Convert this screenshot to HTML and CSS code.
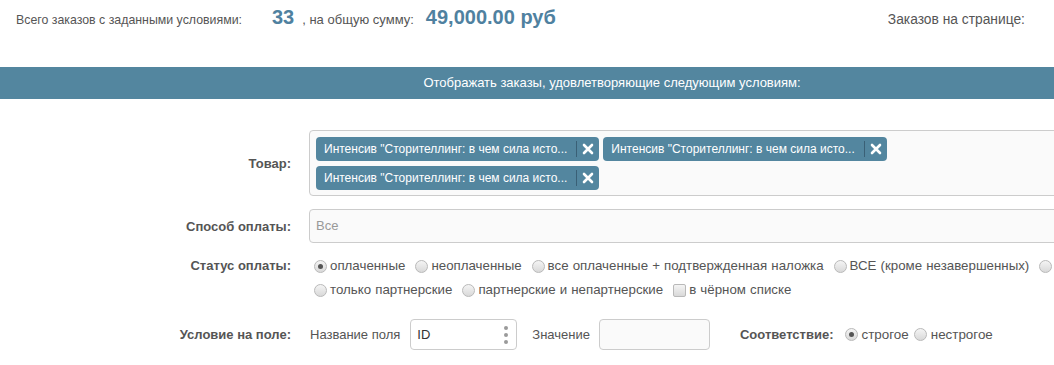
FILE: index.html
```html
<!DOCTYPE html>
<html lang="ru">
<head>
<meta charset="utf-8">
<title>Заказы</title>
<link rel="stylesheet" href="styles.css">
</head>
<body>
<div class="page">
  <div class="summary">
    <span class="summary-text summary-lead">Всего заказов с заданными условиями:</span>
    <span class="summary-num num-count">33</span>
    <span class="summary-text">, на общую сумму:</span>
    <span class="summary-num num-sum">49,000.00 руб</span>
    <span class="summary-text per-page">Заказов на странице:</span>
  </div>

  <div class="bar">Отображать заказы, удовлетворяющие следующим условиям:</div>

  <div class="form">
    <div class="row row-goods">
      <div class="row-label">Товар:</div>
      <div class="tags-box">
        <div class="tags-list">
          <span class="tag"><span class="tag-text">Интенсив "Сторителлинг: в чем сила исто...</span><span class="tag-remove"><svg viewBox="0 0 12 12" width="12" height="12"><path d="M2 2 L10 10 M10 2 L2 10" stroke="#fff" stroke-width="2.6" stroke-linecap="round"/></svg></span></span>
          <span class="tag"><span class="tag-text">Интенсив "Сторителлинг: в чем сила исто...</span><span class="tag-remove"><svg viewBox="0 0 12 12" width="12" height="12"><path d="M2 2 L10 10 M10 2 L2 10" stroke="#fff" stroke-width="2.6" stroke-linecap="round"/></svg></span></span>
          <span class="tag"><span class="tag-text">Интенсив "Сторителлинг: в чем сила исто...</span><span class="tag-remove"><svg viewBox="0 0 12 12" width="12" height="12"><path d="M2 2 L10 10 M10 2 L2 10" stroke="#fff" stroke-width="2.6" stroke-linecap="round"/></svg></span></span>
        </div>
      </div>
    </div>

    <div class="row row-pay">
      <div class="row-label">Способ оплаты:</div>
      <div class="text-input placeholder">Все</div>
    </div>

    <div class="row row-status">
      <div class="row-label">Статус оплаты:</div>
      <div class="options">
        <span class="option"><span class="radio checked"></span>оплаченные</span>
        <span class="option"><span class="radio"></span>неоплаченные</span>
        <span class="option"><span class="radio"></span>все оплаченные + подтвержденная наложка</span>
        <span class="option"><span class="radio"></span>ВСЕ (кроме незавершенных)</span>
        <span class="option option-accent"><span class="radio"></span>предзаказы</span>
        <span class="option"><span class="radio"></span>только партнерские</span>
        <span class="option"><span class="radio"></span>партнерские и непартнерские</span>
        <span class="option"><span class="checkbox"></span>в чёрном списке</span>
      </div>
    </div>

    <div class="row row-field">
      <div class="row-label">Условие на поле:</div>
      <div class="field-controls">
        <span class="field-caption">Название поля</span>
        <span class="select-box">ID<span class="dots"><i></i><i></i><i></i></span></span>
        <span class="field-caption caption-value">Значение</span>
        <span class="value-input"></span>
        <span class="match-label">Соответствие:</span>
        <span class="option"><span class="radio checked"></span>строгое</span>
        <span class="option"><span class="radio"></span>нестрогое</span>
      </div>
    </div>
  </div>
</div>
</body>
</html>
```

FILE: styles.css
```css
html, body {
  margin: 0;
  padding: 0;
  overflow: hidden;
  background: #fff;
}

body {
  font-family: "Liberation Sans", Arial, sans-serif;
  font-size: 13px;
  color: #555;
}

.page {
  width: 1224px;
}

/* summary line */
.summary {
  display: flex;
  align-items: baseline;
  height: 67px;
  box-sizing: border-box;
  padding: 6px 0 0 16px;
}

.summary-text {
  font-size: 13px;
  color: #555;
}

.summary-lead {
  font-size: 12.35px;
}

.summary-num {
  font-size: 20px;
  font-weight: bold;
  color: #4f81a0;
}

.num-count {
  margin: 0 8px 0 30px;
}

.num-sum {
  margin-left: 12px;
}

.per-page {
  margin-left: 332px;
  font-size: 13.8px;
}

/* blue bar */
.bar {
  height: 32px;
  line-height: 32px;
  background: #53869f;
  color: #fff;
  text-align: center;
  font-size: 13px;
}

/* form */
.form {
  padding-top: 31px;
}

.row {
  display: grid;
  grid-template-columns: 291px 901px;
  column-gap: 18px;
  align-items: center;
}

.row-label {
  text-align: right;
  font-weight: bold;
  color: #555;
}

.row-pay {
  margin-top: 13px;
}

.row-status {
  margin-top: 11px;
  align-items: start;
}

.row-status .row-label {
  line-height: 24px;
}

.row-field {
  margin-top: 17px;
}

/* tags select */
.tags-box {
  height: 66px;
  box-sizing: border-box;
  padding: 6px;
  border: 1px solid #ccc;
  border-radius: 4px;
  background: #fafafa;
}

.tags-list {
  display: flex;
  flex-wrap: wrap;
  gap: 5px 4px;
  width: 600px;
}

.tag {
  display: inline-flex;
  align-items: center;
  height: 24px;
  background: #53869f;
  border-radius: 4px;
  color: #fff;
  font-size: 12px;
}

.tag-text {
  padding: 0 9px 0 8px;
  border-right: 1px solid #3a6076;
  line-height: 16px;
  white-space: nowrap;
}

.tag-remove {
  display: flex;
  align-items: center;
  justify-content: center;
  width: 22px;
  height: 24px;
}

/* payment method input */
.text-input {
  height: 34px;
  line-height: 32px;
  box-sizing: border-box;
  padding: 0 6px;
  border: 1px solid #ccc;
  border-radius: 4px;
  background: #fafafa;
}

.placeholder {
  color: #999;
}

/* radio options */
.options {
  display: flex;
  flex-wrap: wrap;
  width: 880px;
  line-height: 24px;
}

.option {
  display: inline-flex;
  align-items: center;
  margin-right: 5px;
  white-space: nowrap;
  color: #555;
  font-size: 13.3px;
  word-spacing: 0.4px;
}

.option-accent {
  color: #d9a441;
}

.radio,
.checkbox {
  display: inline-block;
  position: relative;
  width: 11px;
  height: 11px;
  margin: 0 3px 0 5px;
  border: 1px solid #b9b9b9;
  background: linear-gradient(#f4f4f4, #d9d9d9);
  box-sizing: content-box;
}

.radio {
  border-radius: 50%;
}

.checkbox {
  border-radius: 2px;
}

.radio.checked::after {
  content: "";
  position: absolute;
  left: 3px;
  top: 3px;
  width: 5px;
  height: 5px;
  border-radius: 50%;
  background: #555;
}

/* field condition */
.field-controls {
  display: flex;
  align-items: center;
}

.field-caption {
  margin-left: 1px;
  margin-right: 10px;
}

.caption-value {
  margin-left: 15px;
  margin-right: 9px;
}

.select-box {
  display: flex;
  align-items: center;
  justify-content: space-between;
  width: 107px;
  height: 31px;
  box-sizing: border-box;
  padding: 0 8px 0 6px;
  border: 1px solid #ccc;
  border-radius: 4px;
  color: #333;
}

.dots {
  display: flex;
  flex-direction: column;
  gap: 3px;
}

.dots i {
  display: block;
  width: 4px;
  height: 4px;
  border-radius: 50%;
  background: #9a9a9a;
}

.value-input {
  width: 111px;
  height: 31px;
  box-sizing: border-box;
  border: 1px solid #ccc;
  border-radius: 4px;
  background: #fafafa;
}

.match-label {
  margin-left: 30px;
  margin-right: 6px;
  font-weight: bold;
}

.field-controls .option {
  margin-right: 0;
  font-size: 13.4px;
  word-spacing: 0;
}

.field-controls .radio {
  margin: 0 4px 0 5px;
}
```
